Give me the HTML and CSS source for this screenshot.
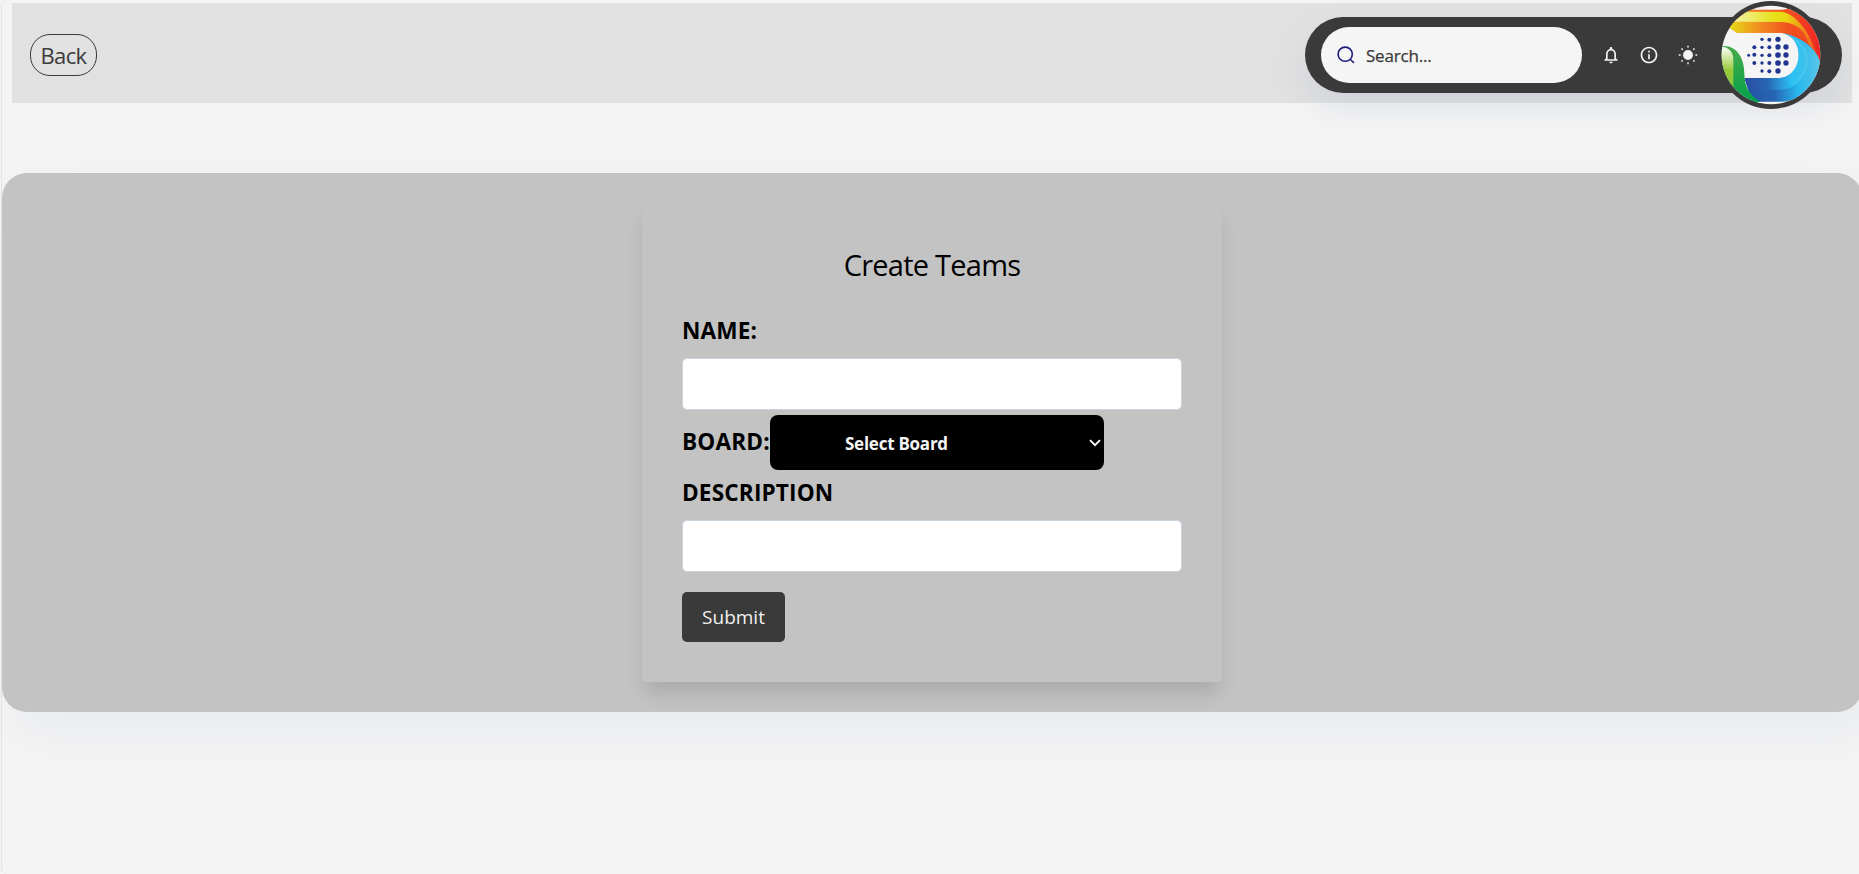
FILE: index.html
```html
<!DOCTYPE html>
<html lang="en">
<head>
<meta charset="utf-8">
<title>Create Teams</title>
<link rel="stylesheet" href="styles.css">
</head>
<body>
<div class="page">
  <header class="navbar">
    <button class="back" type="button"><span>Back</span></button>
    <div class="tools">
      <div class="search">
        <svg class="search-icon" viewBox="0 0 18 18"><circle cx="8.2" cy="8.2" r="7.1"/><path d="M13.2 13.2L17 17"/></svg>
        <span class="search-text">Search...</span>
      </div>
      <svg class="tool bell" viewBox="0 0 24 24"><path d="M12 22c1.1 0 2-.9 2-2h-4c0 1.1.9 2 2 2zm6-6v-5c0-3.07-1.63-5.64-4.500-6.320V4c0-.83-.67-1.500-1.500-1.500s-1.500.67-1.500 1.500v.680C7.640 5.360 6 7.920 6 11v5l-2 2v1h16v-1l-2-2zm-2 1H8v-6c0-2.480 1.510-4.500 4-4.500s4 2.020 4 4.500v6z"/></svg>
      <svg class="tool info" viewBox="0 0 24 24"><path d="M11 7h2v2h-2zm0 4h2v6h-2zm1-9C6.480 2 2 6.480 2 12s4.480 10 10 10 10-4.480 10-10S17.520 2 12 2zm0 18c-4.410 0-8-3.590-8-8s3.590-8 8-8 8 3.590 8 8-3.590 8-8 8z"/></svg>
      <svg class="tool sun" viewBox="0 0 20 20"><circle cx="10" cy="10" r="4.200"/><path d="M10 .8v1.800M10 17.400v1.800M.8 10h1.800M17.400 10h1.800M3.500 3.500l1.200 1.200M15.300 15.300l1.200 1.200M3.500 16.500l1.200-1.200M15.300 4.700l1.200-1.200"/></svg>
      <svg class="avatar" viewBox="50 1 324 324">
        <defs>
          <clipPath id="disc"><circle cx="212" cy="163" r="148"/></clipPath>
          <linearGradient id="yellow"><stop offset="0" stop-color="#f6f3b8"/><stop offset=".5" stop-color="#e6e21c"/><stop offset=".65" stop-color="#e9d911"/><stop offset="1" stop-color="#f4571f"/></linearGradient>
          <linearGradient id="orange"><stop offset="0" stop-color="#e6dd14"/><stop offset=".4" stop-color="#f18a20"/><stop offset=".75" stop-color="#f1501f"/><stop offset="1" stop-color="#ef4a23"/></linearGradient>
          <linearGradient id="red"><stop offset="0" stop-color="#f58a20"/><stop offset=".6" stop-color="#f4501f"/><stop offset="1" stop-color="#ed1c24"/></linearGradient>
          <linearGradient id="blue"><stop offset="0" stop-color="#2350a2"/><stop offset=".4" stop-color="#2766b4"/><stop offset=".7" stop-color="#27b8ef"/><stop offset="1" stop-color="#5cc5e4"/></linearGradient>
          <linearGradient id="deep"><stop offset="0" stop-color="#2b4ba2"/><stop offset=".35" stop-color="#2864b2"/><stop offset=".75" stop-color="#2bc4f5"/><stop offset="1" stop-color="#3fbfe8"/></linearGradient>
          <linearGradient id="lime" x2="0" y2="1"><stop offset="0" stop-color="#fff"/><stop offset=".55" stop-color="#9acb3c"/><stop offset="1" stop-color="#86c440"/></linearGradient>
          <linearGradient id="green" x2="0" y2="1"><stop offset="0" stop-color="#48ab48"/><stop offset="1" stop-color="#00a04c"/></linearGradient>
        </defs>
        <circle cx="212" cy="163" r="162" fill="#3a3a3a"/>
        <circle cx="212" cy="163" r="148" fill="#f5f5f5"/>
        <g clip-path="url(#disc)">
          <path d="M120 27H245L300 20L380 100L360 190C345 145 300 105 240 96H110L85 80Z" fill="url(#red)"/>
          <path d="M90 63H240C290 63 318 90 326 130C300 107 275 97 240 96H110L85 80Z" fill="url(#orange)"/>
          <path d="M85 63L125 33H240C280 36 322 80 348 158C338 143 330 134 324 129C315 85 280 64 240 64Z" fill="url(#yellow)"/>
          <path d="M246 97C300 108 350 140 362 190L360 230C330 280 280 305 240 303H155L132 232H238C310 226 315 110 246 97Z" fill="url(#blue)"/>
          <path d="M246 97C310 112 340 160 317 212C302 247 275 267 240 267H145L132 232H238C310 226 315 110 246 97Z" fill="url(#deep)"/>
          <path d="M246 97C345 123 342 221 274 254C342 200 323 126 246 97Z" fill="#55c9ee" opacity=".6"/>
          <path d="M60 137C108 130 132 170 132 220C132 260 151 287 180 303L150 312L60 230Z" fill="url(#green)"/>
          <path d="M60 137C82 138 99 151 99 176V265L60 230Z" fill="url(#lime)"/>
        </g>
        <g fill="#21368f">
          <circle cx="233" cy="116" r="8"/><circle cx="233" cy="139" r="8"/><circle cx="233" cy="163" r="8.500"/><circle cx="233" cy="187" r="8.500"/><circle cx="233" cy="211" r="8"/>
          <circle cx="257" cy="139" r="8"/><circle cx="257" cy="163" r="8"/><circle cx="257" cy="187" r="8"/>
          <circle cx="207" cy="117" r="6"/><circle cx="207" cy="140" r="6"/><circle cx="207" cy="164" r="6"/><circle cx="207" cy="187" r="6"/><circle cx="207" cy="212" r="6"/>
          <circle cx="185" cy="116" r="5"/><circle cx="185" cy="140" r="5"/><circle cx="185" cy="164" r="5"/><circle cx="185" cy="187" r="5"/><circle cx="185" cy="211" r="5"/>
          <circle cx="162" cy="140" r="6"/><circle cx="162" cy="162" r="6"/><circle cx="162" cy="187" r="6"/><circle cx="145" cy="164" r="4.500"/>
        </g>
      </svg>
    </div>
  </header>
  <main class="panel">
    <form class="card">
      <h1 class="title"><span>Create Teams</span></h1>
      <label class="label name-label"><span>NAME:</span></label>
      <input class="field" type="text">
      <div class="board-row">
        <label class="label board-label"><span>BOARD:</span></label>
        <div class="select">
          <span class="select-text">Select Board</span>
          <svg class="chevron" viewBox="0 0 12 8"><path d="M1 1.200L6 6.200L11 1.200"/></svg>
        </div>
      </div>
      <label class="label desc-label"><span>DESCRIPTION</span></label>
      <input class="field" type="text">
      <button class="submit" type="button"><span>Submit</span></button>
    </form>
  </main>
</div>
</body>
</html>
```

FILE: styles.css
```css
* { box-sizing: border-box; }
html { background: #f4f4f4; }
body {
  margin: 0;
  overflow: hidden;
  font-family: "Open Sans", "Noto Sans", sans-serif;
  color: #000;
}
.page {
  width: 1862px;
  height: 874px;
  margin-left: 1px;
  border-left: 1px solid #e4e4e4;
  border-radius: 6px;
  background: #f4f4f4;
  padding-top: 3px;
}
.navbar {
  width: 1840px;
  height: 100px;
  margin-left: 10px;
  padding: 4px 10px 0 18px;
  background: #e1e1e1;
  display: flex;
  justify-content: space-between;
  align-items: center;
}
.back {
  width: 67px;
  height: 42px;
  padding: 0;
  border: 1px solid #3a3a3a;
  border-radius: 20px;
  background: none;
  color: #3a3a3a;
  font: 400 22px/40px "Open Sans", sans-serif;
  letter-spacing: -0.6px;
}
.tools {
  width: 537px;
  height: 76px;
  border-radius: 38px;
  background: #3a3a3a;
  box-shadow: 0 17px 34px -2px rgba(112, 134, 176, .15);
  padding-left: 16px;
  display: flex;
  align-items: center;
}
.search {
  width: 261px;
  height: 56px;
  border-radius: 28px;
  background: #f5f5f5;
  padding-left: 16px;
  display: flex;
  align-items: center;
  gap: 11px;
}
.search-icon {
  width: 18px;
  height: 18px;
  fill: none;
  stroke: #1b1b7a;
  stroke-width: 1.6;
}
.search-text {
  font-size: 17px;
  font-weight: 500;
  letter-spacing: -0.2px;
  color: #3a3a3a;
  -webkit-text-stroke: 0.25px #3a3a3a;
}
.tool { fill: #f4f4f4; flex: none; }
.bell { width: 20px; height: 20px; margin-left: 19px; }
.info { width: 20px; height: 20px; margin-left: 18px; }
.sun { width: 20px; height: 20px; margin-left: 19px; stroke: #f4f4f4; stroke-width: 1.5; }
.avatar { width: 108px; height: 108px; flex: none; margin: -16px 0 -16px 18.5px; }
.panel {
  width: 1860px;
  height: 539px;
  margin-top: 70px;
  padding-top: 30px;
  border-radius: 25px;
  background: #c3c3c3;
  box-shadow: 14px 19px 52px 4px rgba(112, 144, 176, .08);
}
.card {
  width: 580px;
  height: 479px;
  margin: 0 auto;
  padding: 40px 40px 0;
  border-radius: 5px;
  background: #c3c3c3;
  box-shadow: 0 14px 20px -3px rgba(0, 0, 0, .13);
}
.title {
  margin: 0;
  font-size: 29px;
  line-height: 43px;
  font-weight: 400;
  text-align: center;
  letter-spacing: -0.75px;
}
.label {
  display: block;
  font-size: 22.6px;
  font-weight: 700;
  line-height: 30px;
  letter-spacing: 0.15px;
}
.name-label { margin: 30px 0 12px; height: 30px; }
.field {
  display: block;
  width: 500px;
  height: 52px;
  border: 1px solid #cbd5e0;
  border-radius: 5px;
  background: #fff;
}
.board-row { display: flex; margin-top: 5px; height: 55px; }
.board-label { width: 88px; padding-top: 12px; white-space: nowrap; }
.select {
  width: 334px;
  height: 55px;
  border-radius: 8px;
  background: #000;
  color: #f5f5f5;
  display: flex;
  align-items: center;
  justify-content: space-between;
  padding: 2px 3px 0 75px;
}
.select-text { font-size: 17px; font-weight: 700; letter-spacing: -0.25px; }
.chevron {
  width: 12px;
  height: 8px;
  margin-top: -2px;
  fill: none;
  stroke: #fff;
  stroke-width: 1.9;
}
.desc-label { margin: 8px 0 12px; height: 30px; }
.submit {
  display: block;
  width: 103px;
  height: 50px;
  margin-top: 20px;
  padding: 0;
  border: 0;
  border-radius: 5px;
  background: #3a3a3a;
  color: #f0f0f0;
  font: 400 19px/50px "Open Sans", sans-serif;
}
```
